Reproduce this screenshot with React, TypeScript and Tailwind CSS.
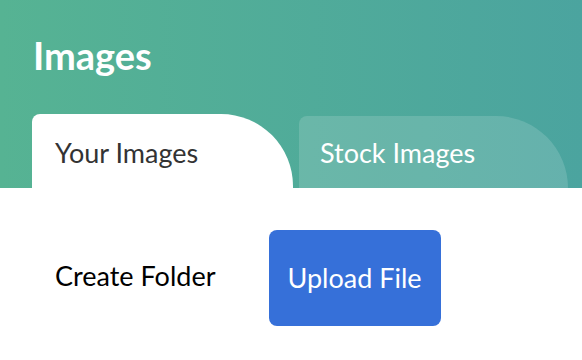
export default function App() {
  return (
    <div className="w-[582px] h-[360px] bg-white overflow-hidden font-['Lato','Liberation_Sans',sans-serif]">
      <header className="h-[188px] bg-linear-to-r from-[#56b393] to-[#4ba49f] pl-[32px] flex flex-col">
        <h1 className="mt-[31px] pl-[1px] text-[38px] leading-[48px] font-bold text-white">Images</h1>

        <div className="mt-auto flex items-end gap-[6px]">
          <div className="w-[261px] h-[74px] bg-white rounded-tl-[8px] rounded-tr-[72px] pl-[23px] pt-[23px]">
            <span className="text-[27px] leading-[32px] text-[#333333]">Your Images</span>
          </div>
          <div className="w-[269px] h-[72px] bg-white/15 rounded-tl-[8px] rounded-tr-[72px] pl-[21px] pt-[21px]">
            <span className="text-[27px] leading-[32px] text-white">Stock Images</span>
          </div>
        </div>
      </header>

      <div className="flex items-center pl-[55px] pt-[42px] gap-[53px]">
        <span className="mb-[4px] text-[27px] leading-[32px] text-black">Create Folder</span>
        <button className="w-[172px] h-[96px] bg-[#3670d9] rounded-[8px] text-white text-[27px] leading-[32px]">
          Upload File
        </button>
      </div>
    </div>
  );
}
